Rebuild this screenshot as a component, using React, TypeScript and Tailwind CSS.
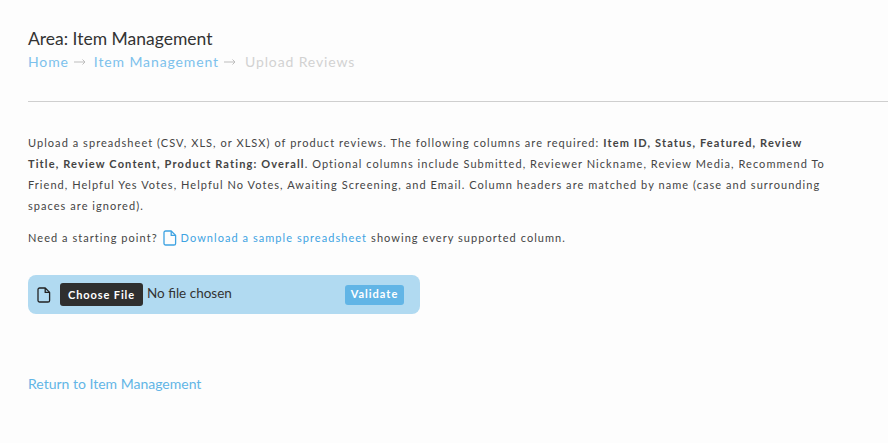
const Doc = ({ className }: { className: string }) => (
  <svg viewBox="0 0 14 16" fill="none" stroke="currentColor" strokeWidth="1.3" strokeLinejoin="round" className={className}>
    <path d="M2.6 1h5.6L12.6 5.4V13.4a1.6 1.6 0 0 1-1.6 1.6H2.6A1.6 1.6 0 0 1 1 13.4V2.6A1.6 1.6 0 0 1 2.6 1Z" />
    <path d="M8.2 1v4.4h4.4" />
  </svg>
);

const Arrow = () => (
  <svg viewBox="0 0 12 8" fill="none" stroke="#bdbdbd" strokeWidth="1" className="w-[12px] h-[8px] mx-[5px] mb-[1px]">
    <path d="M0 4h11M8.5 1.5 11 4 8.5 6.5" />
  </svg>
);

export default function App() {
  return (
    <div className="min-h-[443px] bg-[#fdfdfd] font-['Lato',sans-serif] text-[#333] overflow-hidden">
      <div className="pt-[28px] pl-[28px]">
        <h1 className="text-[17.5px] leading-[22px] font-normal text-[#333]">Area: Item Management</h1>
        <nav className="flex items-center text-[14px] leading-[22px] tracking-[0.88px] mt-[1px] font-normal">
          <a className="text-[#7cc1ec]">Home</a>
          <Arrow />
          <a className="text-[#7cc1ec] ml-[3px]">Item Management</a>
          <Arrow />
          <span className="text-[#d2d2d2] ml-[4px]">Upload Reviews</span>
        </nav>
      </div>
      <div className="ml-[28px] mt-[28px] border-t border-[#cfcfcf]" />
      <div className="pl-[28px] pr-[60px] mt-[30px]">
        <p className="text-[11px] leading-[21px] tracking-[1.05px] text-[#444]">
          Upload a spreadsheet (CSV, XLS, or XLSX) of product reviews. The following columns are required: <b className="font-bold tracking-[1.14px]">Item ID, Status, Featured, Review Title, Review Content, Product Rating: Overall</b>. Optional columns include Submitted, Reviewer Nickname, Review Media, Recommend To Friend, Helpful Yes Votes, Helpful No Votes, Awaiting Screening, and Email. Column headers are matched by name (case and surrounding spaces are ignored).
        </p>
        <p className="flex items-center text-[11px] leading-[21px] tracking-[1.05px] text-[#444] mt-[11px]">
          Need a starting point?
          <Doc className="w-[14px] h-[16px] ml-[5px] mr-[4px] text-[#3ea3e2]" />
          <a className="text-[#3ea3e2]">Download a sample spreadsheet</a>
          <span className="ml-[4px]">showing every supported column.</span>
        </p>
      </div>
      <div className="ml-[28px] mt-[27px] w-[392px] h-[39px] rounded-[8px] bg-[#b1daf1] flex items-center pl-[9px] pr-[16px]">
        <Doc className="w-[14px] h-[16px] text-[#222]" />
        <button className="ml-[9px] h-[23px] w-[83px] rounded-[3px] bg-[#2f2f2f] text-white text-[11px] font-bold tracking-[0.9px] pt-[1px]">Choose File</button>
        <span className="ml-[4px] mb-[2px] text-[13.5px] text-[#333]">No file chosen</span>
        <button className="ml-auto h-[20px] w-[59px] rounded-[3px] bg-[#62b5e6] text-white text-[11px] font-bold tracking-[1px]">Validate</button>
      </div>
      <a className="block ml-[28px] mt-[60px] text-[14px] leading-[20px] text-[#62b5e6]">Return to Item Management</a>
    </div>
  );
}
